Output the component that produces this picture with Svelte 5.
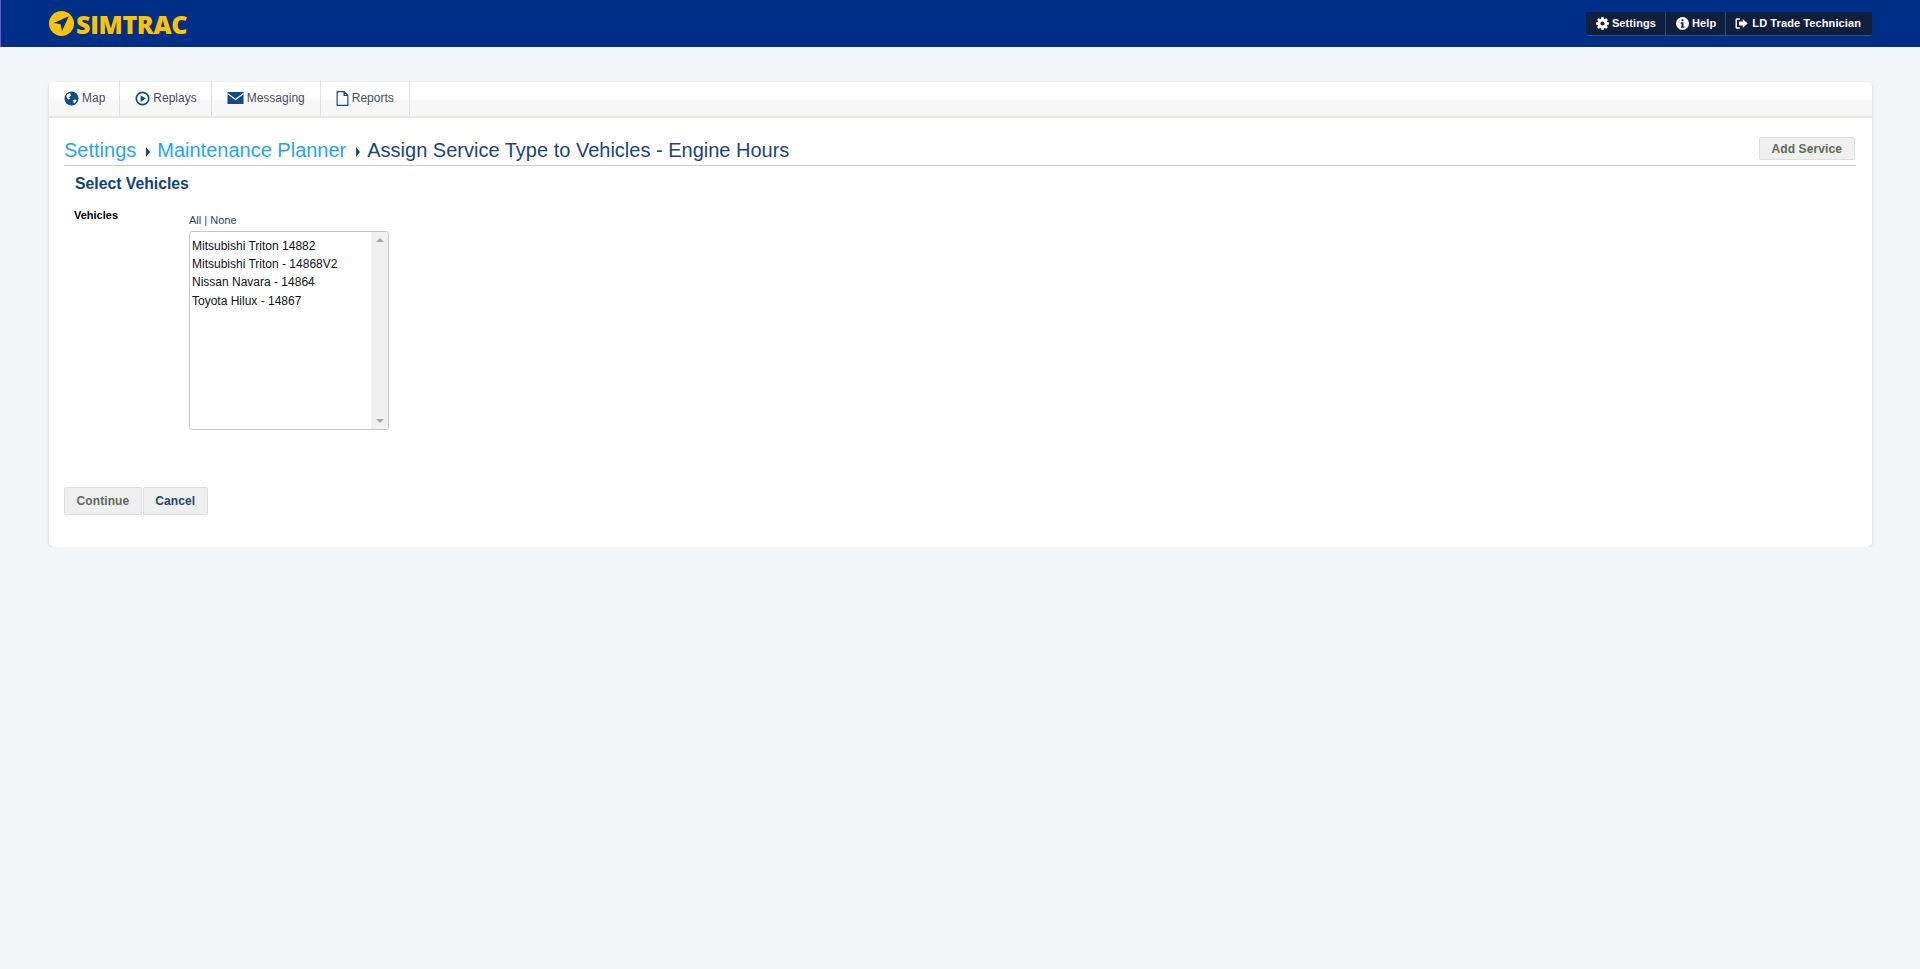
<script>
	const tabs = [
		{ label: "Map", icon: "globe" },
		{ label: "Replays", icon: "play" },
		{ label: "Messaging", icon: "mail" },
		{ label: "Reports", icon: "file" },
	];

	const vehicles = [
		"Mitsubishi Triton 14882",
		"Mitsubishi Triton - 14868V2",
		"Nissan Navara - 14864",
		"Toyota Hilux - 14867",
	];
</script>

<header class="topbar">
	<div class="logo">
		<svg class="logo-mark" viewBox="0 0 24 24" width="25" height="25">
			<circle cx="12" cy="12" r="12" fill="#fdc300" />
			<path d="M19 5 L4.5 11.6 L11.2 12.8 L12.4 19.5 Z" fill="#002f87" />
		</svg>
		<span class="logo-text">SIMTRAC</span>
	</div>
	<nav class="usermenu">
		<a href="#settings">
			<svg viewBox="0 0 16 16" width="13" height="13">
				<path fill="#fff" fill-rule="evenodd" d="M6.7 0h2.6l.4 2.1 1.2.5L12.700 1.400l1.900 1.900-1.200 1.800.5 1.200 2.100.4v2.600l-2.100.4-.5 1.200 1.200 1.800-1.900 1.900-1.800-1.200-1.200.5-.4 2.100H6.700l-.4-2.100-1.200-.5-1.800 1.200-1.900-1.900 1.200-1.800-.5-1.200L0 9.300V6.700l2.100-.4.5-1.200-1.200-1.800 1.900-1.900 1.800 1.200 1.200-.5zM8 5.400a2.600 2.600 0 1 0 0 5.200 2.600 2.600 0 0 0 0-5.200z" />
			</svg>
			Settings
		</a>
		<a href="#help">
			<svg viewBox="0 0 16 16" width="13" height="13">
				<circle cx="8" cy="8" r="8" fill="#fff" />
				<rect x="6.800" y="2.800" width="2.400" height="2.400" fill="#0f1f3d" />
				<path d="M5.800 6.600h3.400v5h1.200v1.600H5.800v-1.600h1v-3.400h-1z" fill="#0f1f3d" />
			</svg>
			Help
		</a>
		<a class="user" href="#user">
			<svg viewBox="0 0 16 16" width="15" height="13">
				<path fill="none" stroke="#fff" stroke-width="1.800" d="M6 2.500H2.500a1 1 0 0 0-1 1v9a1 1 0 0 0 1 1H6" />
				<path fill="#fff" d="M9.500 2.500 15.500 8l-6 5.500V10.500H5v-5h4.500z" />
			</svg>
			LD Trade Technician
		</a>
	</nav>
</header>

<main class="page">
	<section class="card">
		<div class="tabs">
			{#each tabs as tab}
				<a class="tab" href="#{tab.label}">
					{#if tab.icon === "globe"}
						<svg viewBox="0 0 16 16" width="15" height="15">
							<circle cx="8" cy="8" r="7.500" fill="#0f4c8a" />
							<path fill="#fff" d="M3 3.500 6.500 2.500 7.500 5 5.500 6.500 6.500 8.500 4.500 9 2.500 6.500zM9.500 9.500l3-.5 1 1.500-2.500 3-1-1.500z" />
						</svg>
					{:else if tab.icon === "play"}
						<svg viewBox="0 0 16 16" width="15" height="15">
							<circle cx="8" cy="8" r="6.600" fill="none" stroke="#0f4c8a" stroke-width="1.800" />
							<path fill="#0f4c8a" d="M6 4.500 11.500 8 6 11.500z" />
						</svg>
					{:else if tab.icon === "mail"}
						<svg viewBox="0 0 16 12" width="17" height="12">
							<rect width="16" height="12" fill="#0f4c8a" />
							<path fill="none" stroke="#fff" stroke-width="1.100" d="M0 1.500 8 7.500 16 1.500" />
						</svg>
					{:else}
						<svg viewBox="0 0 12 14" width="13" height="15">
							<path fill="none" stroke="#0f4c8a" stroke-width="1.100" d="M1 .6h6.500L11 4v9.400H1zM7.500.6V4H11" />
						</svg>
					{/if}
					{tab.label}
				</a>
			{/each}
		</div>

		<div class="content">
			<div class="titlebar">
				<h1>
					<a href="#settings">Settings</a>
					<span class="caret"></span>
					<a href="#planner">Maintenance Planner</a>
					<span class="caret"></span>
					<span>Assign Service Type to Vehicles - Engine Hours</span>
				</h1>
				<button class="btn add">Add Service</button>
			</div>

			<h2>Select Vehicles</h2>

			<div class="field">
				<div class="field-label">Vehicles</div>
				<div class="field-body">
					<div class="allnone"><a href="#all">All</a> | <a href="#none">None</a></div>
					<div class="listbox">
						<ul>
							{#each vehicles as vehicle}
								<li>{vehicle}</li>
							{/each}
						</ul>
						<div class="scrollbar">
							<span class="arrow up"></span>
							<span class="arrow down"></span>
						</div>
					</div>
				</div>
			</div>

			<div class="actions">
				<button class="btn">Continue</button>
				<button class="btn cancel">Cancel</button>
			</div>
		</div>
	</section>
</main>

<style>
	:global(body) {
		background: #f2f6f9;
		font-family: "Liberation Sans", Arial, sans-serif;
		font-size: 12px;
	}
	a {
		text-decoration: none;
	}
	.topbar {
		height: 47px;
		background: #002f87;
		border-left: 1px solid #7b4fd0;
		display: flex;
		justify-content: space-between;
		align-items: center;
		padding: 0 48px 0 48px;
		box-sizing: border-box;
	}
	.logo {
		display: flex;
		align-items: center;
		gap: 2px;
	}
	.logo-text {
		font-family: "Open Sans", sans-serif;
		font-weight: 800;
		font-size: 25px;
		line-height: 24px;
		color: #fdc300;
		letter-spacing: -0.3px;
	}
	.usermenu {
		display: flex;
		height: 23px;
		background: #0f1f3d;
		border-bottom: 1px solid #2d5290;
		border-radius: 2px;
	}
	.usermenu a {
		display: flex;
		align-items: center;
		gap: 3px;
		color: #fff;
		font-weight: bold;
		font-size: 11px;
		letter-spacing: 0.1px;
		padding: 0 9px 0 10px;
		border-left: 1px solid #2d4a7c;
	}
	.usermenu a:first-child {
		border-left: 0;
	}
	.usermenu .user {
		padding: 0 11px 0 8px;
	}
	.page {
		padding: 35px 48px 0 49px;
	}
	.card {
		background: #fff;
		border-radius: 5px;
		box-shadow: 0 1px 3px rgba(0, 0, 0, 0.16);
		height: 465px;
		box-sizing: border-box;
	}
	.tabs {
		display: flex;
		height: 36px;
		box-sizing: border-box;
		border-bottom: 2px solid #e7e6df;
		background: linear-gradient(#fff 0, #fff 48%, #f7f7f7 55%, #f7f7f7);
		border-radius: 5px 5px 0 0;
	}
	.tab {
		display: flex;
		align-items: center;
		gap: 3px;
		padding: 0 15px;
		color: #444f60;
		font-size: 12px;
		border-right: 1px solid #e2e1da;
		margin-top: -2px;
	}
	.tab:first-child {
		padding-right: 14px;
	}
	.tab:nth-child(2) {
		padding-right: 14px;
	}
	.content {
		padding: 0 16px 0 15px;
	}
	.titlebar {
		display: flex;
		justify-content: space-between;
		align-items: flex-start;
		height: 48px;
		padding-top: 19px;
		box-sizing: border-box;
		border-bottom: 1px solid #cccccc;
	}
	h1 {
		margin: 1px 0 0;
		font-size: 20px;
		font-weight: normal;
		line-height: 24px;
		color: #1c4579;
		display: flex;
		align-items: center;
		gap: 8px;
	}
	h1 a {
		color: #1ea7f0;
	}
	.caret {
		width: 0;
		height: 0;
		border-left: 4px solid #1c4579;
		border-top: 5px solid transparent;
		border-bottom: 5px solid transparent;
		margin: 3px -1px 0 2px;
	}
	.btn {
		height: 28px;
		padding: 0 11.500px;
		background: #efefef;
		border: 1px solid #dddddd;
		border-radius: 2px;
		font-family: inherit;
		font-size: 12px;
		font-weight: bold;
		color: #606a58;
		letter-spacing: 0.1px;
	}
	.add {
		height: 23px;
		padding: 0 12px;
		margin: 0 1px 0 0;
	}
	.cancel {
		color: #1c4579;
	}
	h2 {
		margin: 8px 0 0 11px;
		font-size: 15.750px;
		line-height: 20px;
		font-weight: bold;
		color: #0f4478;
	}
	.field {
		display: flex;
		margin-top: 14px;
	}
	.field-label {
		width: 115px;
		margin-left: 10px;
		font-weight: bold;
		font-size: 11px;
		line-height: 14px;
		color: #000;
	}
	.allnone {
		font-size: 11px;
		line-height: 14px;
		margin-top: 5px;
		color: #1c4579;
	}
	.allnone a {
		color: #1c4579;
	}
	.listbox {
		display: flex;
		width: 200px;
		height: 199px;
		margin-top: 4px;
		border: 1px solid #c8c8c8;
		border-radius: 3px;
		box-sizing: border-box;
		overflow: hidden;
	}
	ul {
		flex: 1;
		list-style: none;
		margin: 0;
		padding: 4.500px 2px;
		font-size: 12px;
		color: #111;
	}
	li {
		line-height: 18.400px;
	}
	.scrollbar {
		width: 17px;
		background: #f0f0f0;
		display: flex;
		flex-direction: column;
		justify-content: space-between;
		align-items: center;
		padding: 6px 0;
		box-sizing: border-box;
	}
	.arrow {
		width: 0;
		height: 0;
		border-left: 4px solid transparent;
		border-right: 4px solid transparent;
	}
	.up {
		border-bottom: 4px solid #a3a3a3;
	}
	.down {
		border-top: 4px solid #a3a3a3;
	}
	.actions {
		display: flex;
		gap: 1px;
		margin-top: 57px;
	}
</style>
